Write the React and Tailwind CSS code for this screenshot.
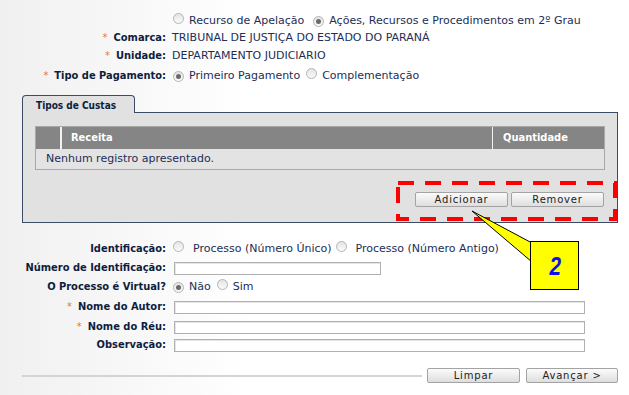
import React from "react";

const LABEL = "font-['DejaVu_Sans_Condensed','DejaVu_Sans',sans-serif] font-bold text-[11px] text-[#0e1d3e]";

function Radio({ checked }) {
  return (
    <span className="inline-flex items-center justify-center w-[11px] h-[11px] rounded-full border border-[#b4b4b4] bg-linear-to-b from-[#e4e4e4] to-[#fbfbfb] shrink-0">
      {checked && <span className="w-[5px] h-[5px] rounded-full bg-[#6a6a6a]" />}
    </span>
  );
}

function Star() {
  return <span className="text-[#f0713a] mr-[6px] font-normal">*</span>;
}

function Row({ h, label, star, children }) {
  return (
    <div className={`flex items-center ${h}`}>
      <div className={`w-[166px] text-right whitespace-nowrap ${LABEL}`}>
        {star && <Star />}
        {label}
      </div>
      <div className="ml-[6px] flex items-center whitespace-nowrap">{children}</div>
    </div>
  );
}

function Btn({ children, w }) {
  return (
    <button className={`${w} h-[15px] flex items-center justify-center rounded-[2px] border border-[#a3a3a3] bg-linear-to-b from-[#fbfbfb] to-[#dedede] text-[10px] tracking-[0.8px] text-[#222] leading-none font-['DejaVu_Sans',sans-serif]`}>
      {children}
    </button>
  );
}

function Input({ w }) {
  return <div className={`${w} h-[13px] border border-[#b0b0b0] bg-white shadow-[inset_1px_1px_0_#e6e6e6]`} />;
}

export default function App() {
  return (
    <div className="relative w-[629px] h-[395px] overflow-hidden bg-linear-to-r from-[#f0f0f0] via-white via-40% to-white font-['DejaVu_Sans',sans-serif] text-[11px] text-[#1d2e55]">
      <div className="pt-[13px]">
        <Row h="h-[17px]">
          <span className="ml-px"><Radio /></span>
          <span className="ml-[5px]">Recurso de Apelação</span>
          <span className="ml-[9px]"><Radio checked /></span>
          <span className="ml-[5px]">Ações, Recursos e Procedimentos em 2º Grau</span>
        </Row>
        <Row h="h-[16px]" label="Comarca:" star>
          <span>TRIBUNAL DE JUSTIÇA DO ESTADO DO PARANÁ</span>
        </Row>
        <Row h="h-[20px]" label="Unidade:" star>
          <span>DEPARTAMENTO JUDICIARIO</span>
        </Row>
        <Row h="h-[21px]" label="Tipo de Pagamento:" star>
          <span className="ml-px"><Radio checked /></span>
          <span className="ml-[5px]">Primeiro Pagamento</span>
          <span className="ml-[6px]"><Radio /></span>
          <span className="ml-[5px]">Complementação</span>
        </Row>
      </div>

      {/* Tab panel */}
      <div className="mt-[8px] ml-[22px] w-[596px]">
        <div className="relative z-10 -mb-px w-[113px] h-[18px] rounded-t-[4px] border border-b-0 border-[#3b4d66] bg-[#e1e1e1] pl-[13px] pt-[2px]">
          <span className="font-['DejaVu_Sans_Condensed','DejaVu_Sans',sans-serif] font-bold text-[10px] text-[#0e1d3e]">Tipos de Custas</span>
        </div>
        <div className="h-[111px] border border-[#3b4d66] bg-[#e1e1e1] pt-[13px] pl-[12px] pr-[12px]">
          <div className="w-[570px] border border-[#a8a8a8]">
            <div className="flex h-[22px] bg-[#858585] text-white font-['DejaVu_Sans_Condensed','DejaVu_Sans',sans-serif] font-bold text-[11px]">
              <div className="w-[24px]" />
              <div className="w-[2px] bg-[#f2f2f2]" />
              <div className="flex-1 flex items-center pl-[9px]">Receita</div>
              <div className="w-px bg-[#f2f2f2]" />
              <div className="w-[111px] flex items-center pl-[10px]">Quantidade</div>
            </div>
            <div className="h-[20px] flex items-center pl-[10px] bg-[#e3e3e3]">Nenhum registro apresentado.</div>
          </div>
          <div className="mt-[22px] flex justify-end gap-[3px] pr-[1px]">
            <Btn w="w-[93px]">Adicionar</Btn>
            <Btn w="w-[93px]">Remover</Btn>
          </div>
        </div>
      </div>

      {/* Form */}
      <div className="mt-[17px]">
        <Row h="h-[18px]" label="Identificação:">
          <span className="ml-px"><Radio /></span>
          <span className="ml-[9px]">Processo (Número Único)</span>
          <span className="ml-[4px]"><Radio /></span>
          <span className="ml-[9px]">Processo (Número Antigo)</span>
        </Row>
        <Row h="h-[20px]" label="Número de Identificação:">
          <span className="ml-[2px]"><Input w="w-[207px]" /></span>
        </Row>
        <Row h="h-[18px]" label="O Processo é Virtual?">
          <span className="ml-px"><Radio checked /></span>
          <span className="ml-[5px]">Não</span>
          <span className="ml-[6px]"><Radio /></span>
          <span className="ml-[5px]">Sim</span>
        </Row>
        <Row h="h-[22px]" label="Nome do Autor:" star>
          <span className="ml-[2px]"><Input w="w-[411px]" /></span>
        </Row>
        <Row h="h-[19px]" label="Nome do Réu:" star>
          <span className="ml-[2px]"><Input w="w-[411px]" /></span>
        </Row>
        <Row h="h-[17px]" label="Observação:">
          <span className="ml-[2px]"><Input w="w-[411px]" /></span>
        </Row>
      </div>

      <div className="mt-[14px] ml-[22px] mr-[11px] flex items-center">
        <div className="flex-1 h-[2px] bg-[#d4d4d4]" />
        <div className="ml-[5px] flex gap-[6px]">
          <Btn w="w-[93px]">Limpar</Btn>
          <Btn w="w-[92px]">Avançar &gt;</Btn>
        </div>
      </div>

      {/* Annotation overlay */}
      <svg className="absolute left-0 top-0 pointer-events-none" width="629" height="395">
        <rect x="398" y="183" width="217" height="36" fill="none" stroke="#ff0000" strokeWidth="4" strokeDasharray="16 11" />
        <polygon points="472,211 532,243 532,262" fill="#ffff00" stroke="#000" strokeWidth="1" />
        <rect x="530.5" y="241.5" width="48" height="48" fill="#ffff00" stroke="#000" strokeWidth="1" />
      </svg>
      <div className="absolute left-[531px] top-[242px] w-[48px] h-[48px] flex items-center justify-center">
        <span className="font-['Liberation_Sans',sans-serif] font-bold italic text-[26px] text-[#1010e8] scale-x-[0.8] leading-none">2</span>
      </div>
    </div>
  );
}
